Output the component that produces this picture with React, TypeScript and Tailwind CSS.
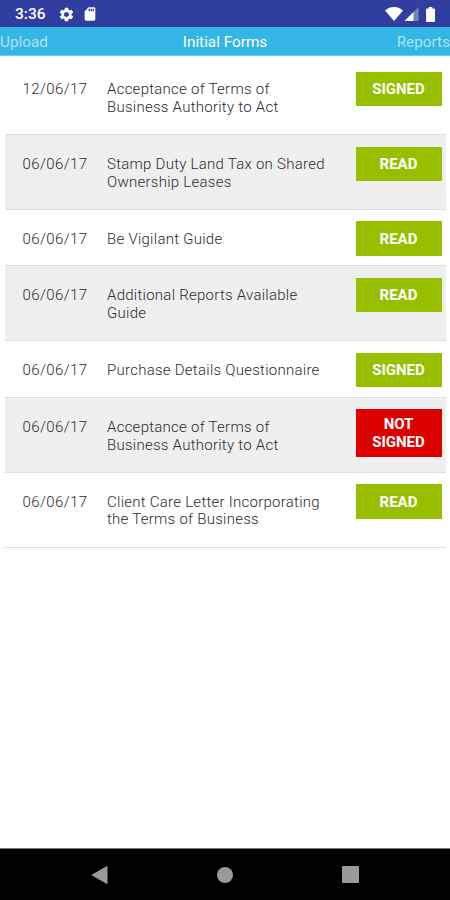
import { MdSdCard, MdSettings } from 'react-icons/md';

const forms = [
  { date: '12/06/17', lines: ['Acceptance of Terms of', 'Business Authority to Act'], status: 'SIGNED' },
  { date: '06/06/17', lines: ['Stamp Duty Land Tax on Shared', 'Ownership Leases'], status: 'READ' },
  { date: '06/06/17', lines: ['Be Vigilant Guide'], status: 'READ' },
  { date: '06/06/17', lines: ['Additional Reports Available', 'Guide'], status: 'READ' },
  { date: '06/06/17', lines: ['Purchase Details Questionnaire'], status: 'SIGNED' },
  { date: '06/06/17', lines: ['Acceptance of Terms of', 'Business Authority to Act'], status: 'NOT SIGNED' },
  { date: '06/06/17', lines: ['Client Care Letter Incorporating', 'the Terms of Business'], status: 'READ' },
];

function StatusBar() {
  return (
    <header className="flex h-[27px] items-center bg-[#303f9f] pl-[15px] pr-[15px] pt-[1px] text-white">
      <span className="w-[43px] pt-[1px] text-[15.500px] font-medium leading-none">3:36</span>
      <MdSettings className="size-[17px]" />
      <MdSdCard className="ml-[7px] size-[16px]" />
      <div className="ml-auto flex items-center">
        <svg className="h-[14px] w-[18px]" viewBox="0 0 18 14">
          <path d="M0 3.4C5.4-1.1 12.6-1.1 18 3.4L9 14Z" fill="currentColor" />
        </svg>
        <svg className="ml-[1px] h-[14px] w-[15px]" viewBox="0 0 14 14">
          <path d="M14 0V14H0Z" fill="currentColor" opacity=".35" />
          <path d="M9 5V14H0Z" fill="currentColor" />
        </svg>
        <svg className="ml-[7px] h-[15px] w-[9px]" viewBox="0 0 9 15">
          <path d="M2.7 0h3.6v1.5H8q1 0 1 1V14q0 1-1 1H1q-1 0-1-1V2.500q0-1 1-1h1.700Z" fill="currentColor" />
        </svg>
      </div>
    </header>
  );
}

function Tabs() {
  return (
    <nav className="flex h-[29px] items-center justify-between border-b border-[#70cdf0] bg-[#33b5e5] pt-[3px] text-[15.3px] leading-none text-white">
      <span className="w-[60px] opacity-60">Upload</span>
      <span>Initial Forms</span>
      <span className="w-[60px] text-right opacity-60">Reports</span>
    </nav>
  );
}

export default function App() {
  return (
    <div className="flex h-[900px] w-[450px] flex-col overflow-hidden bg-white font-[Roboto,sans-serif]">
      <StatusBar />
      <Tabs />
      <main className="flex-1 pl-[5px] pr-[4px] pt-[4.200px]">
        {forms.map((form, i) => (
          <div
            key={i}
            className={`flex items-start border-b border-[#dedede] pl-[17.500px] pr-[4.500px] text-[15px] leading-[17.700px] text-[#2b2b2b] ${
              i % 2 ? 'bg-[#efefef]' : ''
            } ${form.lines.length > 1 ? 'h-[74.900px]' : 'h-[56.500px]'}`}
          >
            <span className="w-[84.500px] pt-[21px] font-light tracking-[0.4px]">{form.date}</span>
            <p className="flex-1 pt-[21px] font-light tracking-[0.26px]">
              {form.lines.map((line) => (
                <span className="block whitespace-nowrap" key={line}>{line}</span>
              ))}
            </p>
            <span
              className={`mt-[11.500px] flex min-h-[34.500px] w-[86px] items-center justify-center px-[12px] pb-[5px] pt-[6.800px] text-center font-bold text-white ${
                form.status === 'NOT SIGNED' ? 'bg-[#dd0000]' : 'bg-[#97bf00]'
              }`}
            >
              {form.status}
            </span>
          </div>
        ))}
      </main>
      <footer className="flex h-[52px] items-center justify-between border-t border-[#777] bg-black px-[91px] text-[#9a9a9a]">
        <svg className="size-[18px]" viewBox="0 0 18 18">
          <path d="M1 9 16 .5V17.500Z" fill="currentColor" stroke="currentColor" strokeLinejoin="round" />
        </svg>
        <div className="mr-[1px] size-[16px] rounded-full bg-[#9a9a9a]" />
        <div className="size-[17px] rounded-[1px] bg-[#9a9a9a]" />
      </footer>
    </div>
  );
}
